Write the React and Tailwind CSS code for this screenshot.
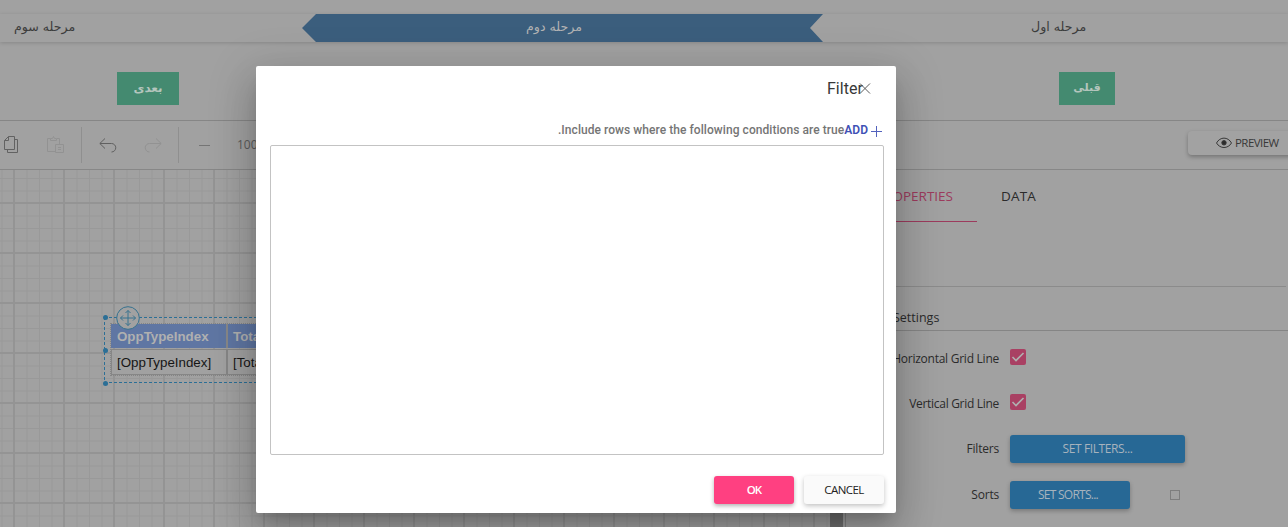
const persian = "font-['DejaVu_Sans',sans-serif]";

function Steps() {
  return (
    <div className={`relative flex h-7 shrink-0 bg-[#a1a1a1] text-[12.6px] leading-[26px] text-[#3c3c3c] shadow-[0_1px_4px_rgba(0,0,0,0.16)] ${persian}`} dir="ltr">
      <div className="w-[302px] pl-[14px]"><span dir="rtl">مرحله سوم</span></div>
      <div className="w-[521px] bg-[#3b5e7d] pl-[224px] font-medium text-[#b4b4b4] [clip-path:polygon(14px_0,100%_0,508px_50%,100%_100%,14px_100%,0_50%)]">
        <span dir="rtl">مرحله دوم</span>
      </div>
      <div className="flex-1 pl-[208px]"><span dir="rtl">مرحله اول</span></div>
    </div>
  );
}

function CopyIcon() {
  return (
    <svg width="14" height="18" viewBox="0 0 14 18" fill="none" stroke="#626262">
      <path d="M4.500.5h6v13h-10v-9zM4.500.5v4h-4M10.500 3.500h3v13h-10v-3" />
    </svg>
  );
}

function PasteIcon() {
  return (
    <svg width="18" height="18" viewBox="0 0 18 18" fill="none" stroke="#929292">
      <path d="M8.500 15.500h-8v-13h3M10 2.500h2.500v5.500M3.500 4.500v-2h2l1-2 1 2h2v2zM8.500 8.500h8v8h-8zM11 11.500h3M11 13.500h3" />
    </svg>
  );
}

function UndoIcon({ flip }) {
  return (
    <svg width="18" height="15" viewBox="0 0 18 15" fill="none" stroke={flip ? "#929292" : "#606060"} className={flip ? "-scale-x-100" : ""}>
      <path d="M6 .5.8 5.500 6 10.500M1 5.500h11.500a4.200 4.200 0 0 1 0 8.500" />
    </svg>
  );
}

function Toolbar() {
  return (
    <div className="flex h-[49px] shrink-0 items-center border-b border-[#878787]">
      <div className="flex h-full w-[81px] shrink-0 items-center pl-1">
        <CopyIcon />
        <div className="ml-[29px] flex"><PasteIcon /></div>
      </div>
      <div className="h-9 w-px bg-[#8f8f8f]" />
      <div className="flex w-[96px] items-center gap-[27px] pl-[17px]">
        <UndoIcon />
        <UndoIcon flip />
      </div>
      <div className="h-9 w-px bg-[#8f8f8f]" />
      <div className="ml-5 h-px w-[11px] bg-[#757575]" />
      <div className="ml-[27px] font-['Open_Sans',sans-serif] text-[12px] text-[#5c5c5c]">100%</div>
      <button className="mt-[-4px] mr-[-5px] ml-auto flex h-6 w-[105px] items-center rounded-sm bg-[#a2a2a2] pl-7 font-['Open_Sans',sans-serif] text-[11.5px] tracking-[-0.55px] text-[#383838] shadow-[0_2px_4px_rgba(0,0,0,0.28)]">
        <svg width="16" height="12" viewBox="0 0 16 12" fill="none" stroke="#383838" className="mr-[3px]">
          <path d="M.5 6C4-.5 12-.5 15.500 6 12 12 4 12 .5 6z" />
          <circle cx="8" cy="5.800" r="2.200" fill="#2c2c2c" />
        </svg>
        PREVIEW
      </button>
    </div>
  );
}

function Dot({ place }) {
  return <i className={`absolute -left-px size-[5px] rounded-full bg-[#2c6f96] ${place}`} />;
}

function Canvas() {
  return (
    <div className="relative w-[830px] shrink-0 overflow-hidden bg-[#a1a1a1] [background-image:linear-gradient(90deg,#949494_2px,transparent_2px),linear-gradient(#949494_2px,transparent_2px),linear-gradient(90deg,#999_1px,transparent_1px),linear-gradient(#999_1px,transparent_1px)] [background-position:13px_32px,13px_32px,14px_32px,14px_33px] [background-size:50px_50px,50px_50px,12.5px_12.5px,12.5px_12.5px]">
      <div className="absolute top-[147px] left-[104px] h-[66px] w-[400px]">
        <svg width="400" height="66" className="absolute inset-0" fill="none" stroke="#2c6f96" strokeDasharray="3 2">
          <path d="M0 .5h400M0 65.500h400M.5 0v66" />
        </svg>
        <Dot place="-top-[2px]" />
        <Dot place="top-[31px]" />
        <Dot place="top-[64px]" />
        <div className="absolute top-[6px] left-[6px] w-[390px] border border-dotted border-[#858585] font-['Liberation_Sans',sans-serif] text-[13.33px]">
          <div className="flex h-[24px] gap-0.5 bg-[#888] font-bold leading-[25px] text-[#b0b0b0]">
            <div className="w-[115px] bg-[#5f76a3] pl-[6px]">OppTypeIndex</div>
            <div className="flex-1 bg-[#5f76a3] pl-[5px]">TotalCount</div>
          </div>
          <div className="mt-px flex h-[26px] gap-0.5 border border-[#868686] bg-[#868686] leading-[25px] text-[#161616]">
            <div className="w-[114px] bg-[#a1a1a1] pl-[5px]">[OppTypeIndex]</div>
            <div className="flex-1 bg-[#a1a1a1] pl-[5px]">[TotalCount]</div>
          </div>
        </div>
        <svg width="24" height="24" viewBox="0 0 24 24" fill="none" stroke="#37728f" className="absolute -top-[11px] left-3">
          <circle cx="12" cy="12" r="11.300" fill="#a1a1a1" />
          <path d="M12 4.500v15M4.500 12h15M9.500 7 12 4.500 14.500 7M9.500 17l2.500 2.500 2.500-2.500M7 9.500 4.500 12 7 14.500M17 9.500l2.500 2.500-2.500 2.500" />
        </svg>
      </div>
    </div>
  );
}

function Check() {
  return (
    <span className="mt-[-2px] flex size-4 items-center justify-center rounded-[2px] bg-[#a94063]">
      <svg width="14" height="12" viewBox="0 0 14 12" fill="none" stroke="#b0b0b0" strokeWidth="1.600">
        <path d="m1.500 6 3.500 3.500L12.500 2" />
      </svg>
    </span>
  );
}

function Field({ label, height, labelClass, children }) {
  return (
    <div className={`flex items-center ${height}`}>
      <div className={`mr-[11px] w-[153px] shrink-0 text-right whitespace-nowrap ${labelClass}`}>{label}</div>
      {children}
    </div>
  );
}

const action = "h-7 rounded-[3px] bg-[#276895] text-[12px] text-[#a7b3bd] shadow-[0_2px_4px_rgba(0,0,0,0.25)]";

function Panel() {
  return (
    <div className="min-w-0 flex-1 border-l border-[#858585] font-['Open_Sans',sans-serif] text-[12px] text-[#2b2b2b]">
      <div className="flex h-[52px] text-[13.5px] leading-[52px] font-medium">
        <div className="w-[131px] border-b border-[#9c3b5d] text-right text-[#9c3b5d]"><span className="mr-6">PROPERTIES</span></div>
        <div className="pl-6 tracking-[0.2px]">DATA</div>
      </div>
      <div className="mr-0.5 h-[65px] border-b border-[#8b8b8b]" />
      <div className="h-11 border-b border-[#858585] pt-[21px] pl-[47px] text-[12.5px] leading-5 font-medium">Settings</div>
      <Field label="Horizontal Grid Line" height="h-[54px]" labelClass="pt-0.5 tracking-[-0.25px]"><Check /></Field>
      <Field label="Vertical Grid Line" height="h-[36px]" labelClass="pt-0.5 tracking-[-0.3px]"><Check /></Field>
      <Field label="Filters" height="h-[56px]" labelClass="tracking-[-0.2px]"><button className={`w-[175px] tracking-[-0.4px] ${action}`}>SET FILTERS...</button></Field>
      <Field label="Sorts" height="h-9" labelClass="tracking-[-0.2px]">
        <button className={`w-[120px] pr-1 tracking-[-0.75px] ${action}`}>SET SORTS...</button>
        <span className="ml-10 size-[10px] border border-[#7e7e7e]" />
      </Field>
    </div>
  );
}

function Dialog() {
  return (
    <div className="absolute top-[66px] left-64 flex h-[447px] w-[640px] flex-col rounded-[2px] bg-white pr-3 pl-[14px] font-['Roboto',sans-serif] shadow-[0_11px_15px_-7px_rgba(0,0,0,0.2),0_24px_38px_3px_rgba(0,0,0,0.14),0_9px_46px_8px_rgba(0,0,0,0.12)]">
      <div className="flex h-[45px] items-center justify-end pr-[13px] text-[16px] text-[#383838]">
        <span className="tracking-[0.05px]">Filter</span>
        <svg width="12" height="12" viewBox="0 0 12 12" stroke="#5a5a5a" className="-ml-[4px]"><path d="m1 .500 10 10m0-10L1 10.500" /></svg>
      </div>
      <div className="flex h-[34px] items-end justify-end pb-[5px] pr-[2px] text-[12px] leading-5 font-medium text-[#757575]">
        <span className="tracking-[0.06px]">.Include rows where the following conditions are true</span>
        <span className="font-semibold text-[#3f51b5]">ADD</span>
        <svg width="11" height="11" viewBox="0 0 11 11" stroke="#5262bd" className="mb-[3px] ml-[3px]"><path d="M5.500 0v11M0 5.500h11" /></svg>
      </div>
      <div className="h-[310px] rounded-[2px] border border-[#c3c3c3]" />
      <div className="mt-[21px] flex justify-end gap-[10px] font-['Open_Sans',sans-serif] text-[11.5px]">
        <button className="h-7 w-20 rounded-[3px] bg-[#ff4081] font-semibold tracking-[-0.9px] text-white shadow-[0_2px_4px_rgba(0,0,0,0.3)]">OK</button>
        <button className="h-7 w-20 rounded-[3px] bg-[#fafafa] tracking-[-0.55px] text-[#222] shadow-[0_2px_5px_rgba(0,0,0,0.24)]">CANCEL</button>
      </div>
    </div>
  );
}

export default function App() {
  return (
    <div className="relative flex h-[527px] w-[1288px] flex-col overflow-hidden bg-[#a1a1a1] pt-[14px]">
      <Steps />
      <div className={`flex h-[79px] shrink-0 justify-between border-b border-[#868686] pt-[30px] pr-[173px] pl-[117px] text-[12px] font-bold text-[#b4c5bd] ${persian}`}>
        <button className="h-[33px] w-[62px] bg-[#448a70] pb-0.5" dir="rtl">بعدی</button>
        <button className="h-[33px] w-14 bg-[#448a70] text-[11px]" dir="rtl">قبلی</button>
      </div>
      <Toolbar />
      <div className="flex min-h-0 flex-1">
        <Canvas />
        <div className="w-[13px] shrink-0 bg-[#707070]" />
        <div className="w-0.5 shrink-0" />
        <Panel />
      </div>
      <Dialog />
    </div>
  );
}
